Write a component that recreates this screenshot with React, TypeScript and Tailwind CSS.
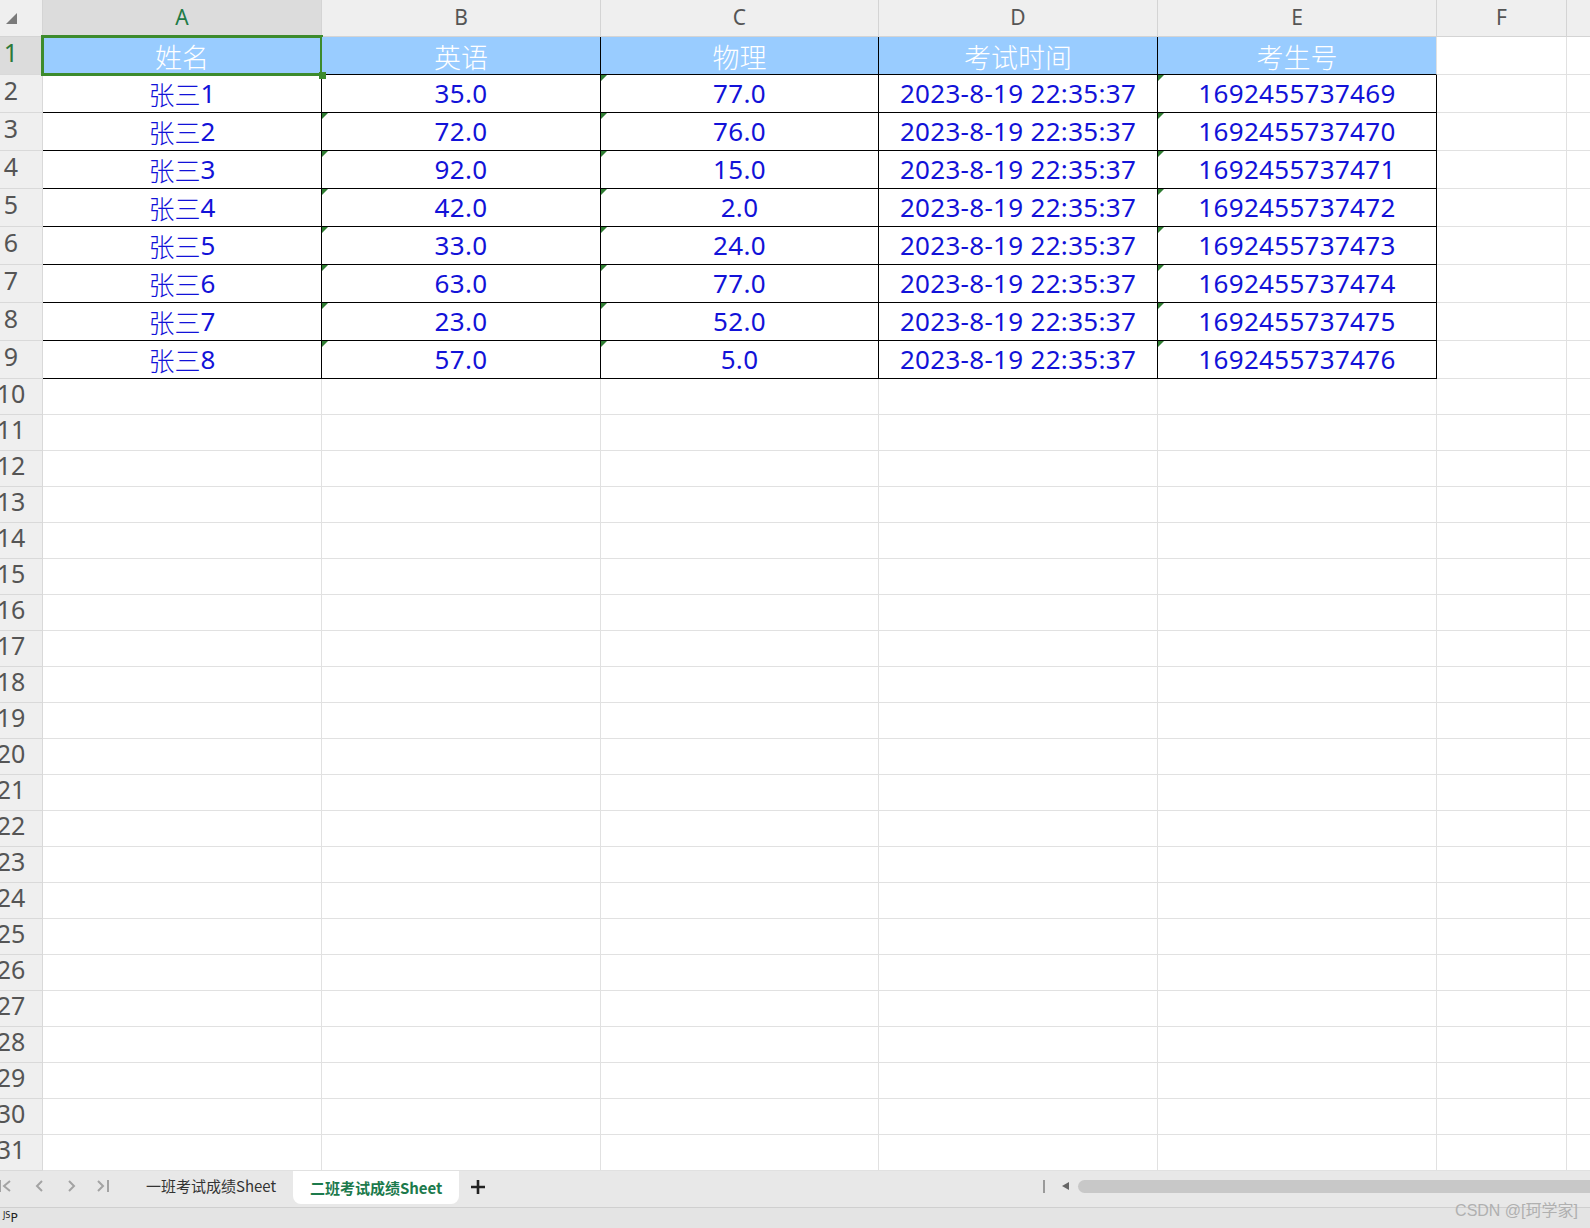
import * as React from "react"

const sans = "font-['Noto_Sans','Noto_Sans_CJK_SC',sans-serif]"
const cjk = "font-['Noto_Sans_CJK_SC',sans-serif]"

const letters = ["A", "B", "C", "D", "E", "F", ""]
const headers = ["姓名", "英语", "物理", "考试时间", "考生号"]

const rows = [
  ["1", "35.0", "77.0", "69"],
  ["2", "72.0", "76.0", "70"],
  ["3", "92.0", "15.0", "71"],
  ["4", "42.0", "2.0", "72"],
  ["5", "33.0", "24.0", "73"],
  ["6", "63.0", "77.0", "74"],
  ["7", "23.0", "52.0", "75"],
  ["8", "57.0", "5.0", "76"],
]

const cell =
  "flex items-center justify-center border-r border-b border-black text-[26px] tracking-[0.3px] text-[#1212d8] "

function Tri() {
  return (
    <span className="absolute left-0 top-0 h-0 w-0 border-t-[6px] border-r-[6px] border-t-[#2f7d32] border-r-transparent" />
  )
}

function RowHead({ n, active }: { n: number; active?: boolean }) {
  return (
    <div
      className={
        "overflow-hidden border-r border-b border-[#d9d9d9] " +
        (active ? "bg-[#dcdcdc] text-[#2b7a3b]" : "bg-[#efefef] text-[#555]")
      }
    >
      <div className={"-mt-[3px] flex h-full w-[22px] items-center justify-center text-[25px] leading-none " + sans}>
        <span className="whitespace-nowrap">{n}</span>
      </div>
    </div>
  )
}

function Blank({ last }: { last?: boolean }) {
  return <div className={"border-b border-[#e1e1e1] " + (last ? "" : "border-r")} />
}

export default function App() {
  return (
    <div className="flex h-[1228px] w-[1590px] flex-col overflow-hidden bg-white">
      <div className="grid grid-cols-[43px_279px_279px_278px_279px_279px_130px_1fr] grid-rows-[37px_repeat(9,38px)_repeat(22,36px)]">
        {/* column header */}
        <div className="relative border-r border-b border-[#d4d4d4] bg-[#efefef]">
          <span className="absolute left-[6px] top-[13px] h-0 w-0 border-b-[11px] border-l-[11px] border-b-[#7a7a7a] border-l-transparent" />
        </div>
        {letters.map((l, i) => (
          <div
            key={l + i}
            className={
              "flex items-center justify-center border-b border-[#d4d4d4] text-[21px] " +
              sans +
              (i < 6 ? " border-r" : "") +
              (i === 0 ? " bg-[#dcdcdc] text-[#217a45]" : " bg-[#efefef] text-[#555]")
            }
          >
            {l}
          </div>
        ))}

        {/* row 1 */}
        <RowHead n={1} active />
        {headers.map((h, i) => (
          <div
            key={h}
            className={
              "relative flex items-center justify-center border-b bg-[#99ccff] pt-[3px] text-[27px] font-light text-white " +
              cjk +
              (i < 4 ? " border-r border-black" : " border-r border-r-[#e1e1e1] border-b-black")
            }
          >
            {h}
            {i === 0 && (
              <>
                <span className="absolute -left-[2px] -top-[2px] -right-[2px] -bottom-[2px] border-[3px] border-[#3d8b2d]" />
                <span className="absolute -bottom-[5px] -right-[5px] z-10 h-[7px] w-[7px] bg-[#3d8b2d]" />
              </>
            )}
          </div>
        ))}
        <Blank />
        <Blank last />

        {/* data rows */}
        {rows.map((r, idx) => (
          <React.Fragment key={r[0]}>
            <RowHead n={idx + 2} />
            <div className={cell}>
              <span className={cjk + " font-light tracking-normal"}>张三</span>
              <span className={sans}>{r[0]}</span>
            </div>
            <div className={"relative " + cell + sans}>
              {idx > 0 && <Tri />}
              {r[1]}
            </div>
            <div className={"relative " + cell + sans}>
              <Tri />
              {r[2]}
            </div>
            <div className={cell + sans}>2023-8-19 22:35:37</div>
            <div className={"relative " + cell + sans}>
              <Tri />
              16924557374{r[3]}
            </div>
            <Blank />
            <Blank last />
          </React.Fragment>
        ))}

        {/* empty rows */}
        {Array.from({ length: 22 }, (_, k) => (
          <React.Fragment key={k}>
            <RowHead n={k + 10} />
            {[0, 1, 2, 3, 4, 5].map((c) => (
              <Blank key={c} />
            ))}
            <Blank last />
          </React.Fragment>
        ))}
      </div>

      {/* sheet tabs */}
      <div className={"relative flex h-[36px] items-start bg-[#e8e8e8] " + cjk}>
        <div className="flex h-[30px] items-center text-[#a3a3a3]">
          <svg width="14" height="14" viewBox="0 0 14 14" className="-ml-[2px]" fill="none" stroke="currentColor" strokeWidth="2">
            <path d="M2 1v12M12 2 6 7l6 5" />
          </svg>
          <svg width="14" height="14" viewBox="0 0 14 14" className="ml-[20px]" fill="none" stroke="currentColor" strokeWidth="2">
            <path d="M10 2 5 7l5 5" />
          </svg>
          <svg width="14" height="14" viewBox="0 0 14 14" className="ml-[19px]" fill="none" stroke="currentColor" strokeWidth="2">
            <path d="M4 2l5 5-5 5" />
          </svg>
          <svg width="14" height="14" viewBox="0 0 14 14" className="ml-[17px]" fill="none" stroke="currentColor" strokeWidth="2">
            <path d="M2 2l5 5-5 5M12 1v12" />
          </svg>
        </div>
        <div className="ml-[36px] flex h-[30px] items-center text-[15px] text-[#333]">一班考试成绩Sheet</div>
        <div className="ml-[17px] flex h-[33px] w-[166px] items-center justify-center rounded-b-[8px] bg-white pt-[1px] text-[15px] font-bold text-[#1c7a4c]">
          二班考试成绩Sheet
        </div>
        <svg width="16" height="16" viewBox="0 0 16 16" className="ml-[11px] mt-[8px]" fill="none" stroke="#222" strokeWidth="2.6">
          <path d="M8 1v14M1 8h14" />
        </svg>
        <div className="ml-auto flex h-[30px] items-center">
          <span className="h-[13px] w-[2px] bg-[#9a9a9a]" />
          <span className="ml-[17px] h-0 w-0 border-y-[4px] border-r-[7px] border-y-transparent border-r-[#666]" />
          <span className="ml-[9px] h-[13px] w-[512px] rounded-l-full bg-[#c8c8c8]" />
        </div>
      </div>

      {/* status bar */}
      <div className="relative flex h-[21px] items-center border-t border-[#cfcfcf] bg-[#e4e4e4] px-[3px] font-['DejaVu_Sans',sans-serif] text-[#222]">
        <span className="-mt-[4px] text-[8px] leading-none">JS</span>
        <span className="text-[12px] leading-none">P</span>
        <span className="absolute right-[12px] -top-[9px] font-['Liberation_Sans','Noto_Sans_CJK_SC',sans-serif] text-[16px] text-[#b0b0b0]">
          CSDN @[珂学家]
        </span>
      </div>
    </div>
  )
}
